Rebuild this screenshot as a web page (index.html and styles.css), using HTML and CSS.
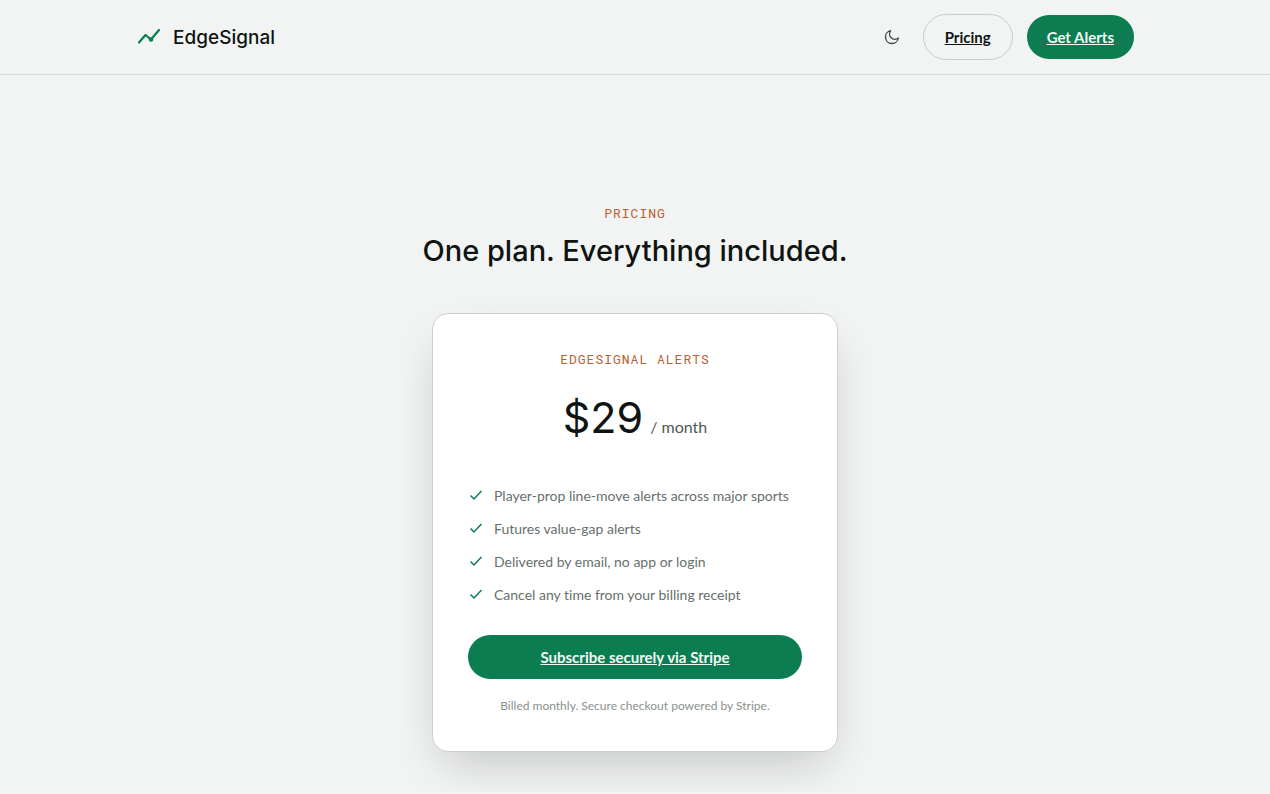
FILE: index.html
```html
<!DOCTYPE html>
<html lang="en">
<head>
    <meta charset="UTF-8">
    <meta name="viewport" content="width=device-width, initial-scale=1.0">
    <title>EdgeSignal - Pricing</title>
    <link rel="stylesheet" href="styles.css">
</head>
<body>
    <header class="site-header">
        <div class="container header-inner">
            <a href="#" class="brand">
                <svg class="brand-icon" viewBox="0 0 24 24" aria-hidden="true">
                    <path d="M2.5 17.5 L9 10 L14.5 14.5 L22.5 5"/>
                    <circle cx="14.5" cy="14.5" r="2.3"/>
                </svg>
                <span>EdgeSignal</span>
            </a>
            <nav class="nav">
                <button type="button" class="theme-toggle" aria-label="Toggle dark mode">
                    <svg class="moon-icon" viewBox="0 0 24 24" aria-hidden="true">
                        <path d="M21.5 13.5A9.7 9.7 0 1 1 10 2.5a8 8 0 0 0 11.5 11z"/>
                    </svg>
                </button>
                <a href="#pricing" class="btn btn-outline">Pricing</a>
                <a href="#subscribe" class="btn btn-primary">Get Alerts</a>
            </nav>
        </div>
    </header>

    <main class="pricing" id="pricing">
        <p class="eyebrow">Pricing</p>
        <h1 class="title">One plan. Everything included.</h1>

        <section class="card">
            <p class="eyebrow">EdgeSignal Alerts</p>
            <p class="price"><span class="amount">$29</span> <span class="period">/ month</span></p>
            <ul class="features">
                <li>
                    <svg class="check" viewBox="0 0 16 16" aria-hidden="true"><path d="M2.5 7.5 L6 11 L13.5 3"/></svg>
                    Player-prop line-move alerts across major sports
                </li>
                <li>
                    <svg class="check" viewBox="0 0 16 16" aria-hidden="true"><path d="M2.5 7.5 L6 11 L13.5 3"/></svg>
                    Futures value-gap alerts
                </li>
                <li>
                    <svg class="check" viewBox="0 0 16 16" aria-hidden="true"><path d="M2.5 7.5 L6 11 L13.5 3"/></svg>
                    Delivered by email, no app or login
                </li>
                <li>
                    <svg class="check" viewBox="0 0 16 16" aria-hidden="true"><path d="M2.5 7.5 L6 11 L13.5 3"/></svg>
                    Cancel any time from your billing receipt
                </li>
            </ul>
            <a href="#subscribe" class="btn btn-primary btn-wide" id="subscribe">Subscribe securely via Stripe</a>
            <p class="note">Billed monthly. Secure checkout powered by Stripe.</p>
        </section>
    </main>
</body>
</html>
```
FILE: styles.css
```css
*{
    box-sizing: border-box;
}
body{
    margin: 0;
    background-color: #f2f4f3;
    color: #0f1412;
    font-family: Lato, "Liberation Sans", sans-serif;
    font-size: 14px;
    font-variant-ligatures: none;
}
p, h1, ul{
    margin: 0;
    padding: 0;
}
.site-header{
    border-bottom: 1px solid #d9dddb;
}
.container{
    max-width: 1046px;
    margin: 0 auto;
    padding: 0 24px;
}
.header-inner{
    display: flex;
    align-items: center;
    justify-content: space-between;
    height: 74px;
}
.brand{
    display: flex;
    align-items: center;
    gap: 12px;
    color: #0f1412;
    font-family: Inter, "Liberation Sans", sans-serif;
    font-size: 19px;
    font-weight: 500;
    text-decoration: none;
}
.brand-icon{
    width: 25px;
    height: 24px;
    fill: none;
    stroke: #0b7d51;
    stroke-width: 2.2;
    stroke-linecap: round;
    stroke-linejoin: round;
}
.brand-icon circle{
    fill: #0b7d51;
    stroke: none;
}
.nav{
    display: flex;
    align-items: center;
    gap: 14px;
}
.theme-toggle{
    display: flex;
    padding: 9px;
    border: none;
    background: none;
    cursor: pointer;
}
.moon-icon{
    width: 16px;
    height: 16px;
    fill: none;
    stroke: #3e4643;
    stroke-width: 2;
    stroke-linejoin: round;
}
.btn{
    display: inline-block;
    padding: 12px 20px;
    border-radius: 23px;
    font-size: 15px;
    font-weight: 700;
    line-height: 20px;
    text-align: center;
}
.btn-outline{
    padding: 12px 21px;
    border: 1px solid #c9cecb;
    color: #0f1412;
}
.btn-primary{
    background-color: #0b7d51;
    color: #f2f8f5;
}
.btn-wide{
    display: block;
}
.pricing{
    padding: 128px 24px 40px;
}
.eyebrow{
    color: #b8602f;
    font-family: "Roboto Mono", "Liberation Mono", monospace;
    font-size: 13px;
    letter-spacing: 1px;
    line-height: 20px;
    text-align: center;
    text-transform: uppercase;
}
.title{
    margin-top: 10px;
    font-family: Inter, "Liberation Sans", sans-serif;
    font-size: 29px;
    font-weight: 500;
    line-height: 36px;
    text-align: center;
}
.card{
    max-width: 406px;
    margin: 44px auto 0;
    padding: 35px;
    border: 1px solid #cbd0cd;
    border-radius: 16px;
    background-color: #fff;
    box-shadow: 0 20px 48px -12px rgba(15, 20, 18, 0.22);
}
.price{
    display: flex;
    align-items: baseline;
    justify-content: center;
    gap: 7px;
    margin-top: 20px;
    font-family: Inter, "Liberation Sans", sans-serif;
    line-height: 56px;
}
.amount{
    font-size: 43px;
}
.period{
    color: #4d5754;
    font-family: Lato, "Liberation Sans", sans-serif;
    font-size: 16px;
}
.features{
    margin-top: 30px;
    list-style: none;
}
.features li{
    display: flex;
    align-items: center;
    gap: 10px;
    margin-bottom: 11px;
    color: #66706c;
    line-height: 22px;
}
.check{
    flex: none;
    width: 16px;
    height: 16px;
    fill: none;
    stroke: #0b7d51;
    stroke-width: 1.5;
}
.features + .btn{
    margin-top: 29px;
}
.note{
    margin-top: 17px;
    color: #8a918e;
    font-size: 12px;
    line-height: 20px;
    text-align: center;
}
```
